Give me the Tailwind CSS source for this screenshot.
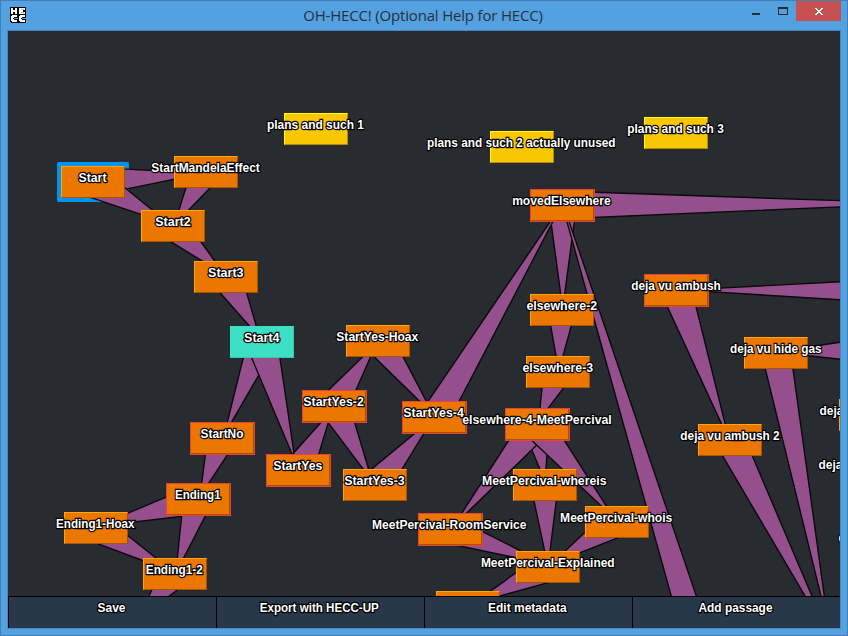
<!DOCTYPE html>
<html lang="en">
<head>
<meta charset="utf-8">
<title>OH-HECC!</title>
<script src="https://cdn.jsdelivr.net/npm/@tailwindcss/browser@4"></script>
</head>
<body class="h-[636px] w-[848px] overflow-hidden">
<div class="flex h-[636px] w-[848px] flex-col border border-[#427fb4] bg-[#54a1e2] font-['Liberation_Sans',Arial,sans-serif]">
  <header class="relative flex h-[29px] shrink-0 items-start justify-end pr-[6px]">
    <svg class="absolute left-[9px] top-[6px]" width="16" height="16" viewBox="0 0 16 16" shape-rendering="crispEdges">
      <path fill="#000" d="M0 0h16v16H1v-1H0z"/>
      <path fill="#fff" d="M1 1h2v2h2V1h2v6H5V5H3v2H1zM9 1h5v1h-3v1h2v2h-2v1h3v1H9zM2 8h5v2H4v1H3v1h1v1h3v2H2v-1H1V9h1zM10 8h5v2h-3v1h-1v1h1v1h3v2h-5v-1H9V9h1z"/>
      <path fill="#fff" d="M11 1h4v2h-2v-1h-2zM11 5h4v2h-4z"/>
      <path fill="#b9b9b9" d="M11 2h3v1h-3zM11 5h3v1h-3z"/>
      <path fill="#54a1e2" d="M4 11h4v1H4zM12 11h4v1h-4z"/>
    </svg>
    <h1 class="absolute left-0 right-[2px] top-[4px] text-center font-['Open_Sans',sans-serif] text-[15px] leading-5 tracking-[-0.18px] text-[#26303a]">OH-HECC! (Optional Help for HECC)</h1>
    <svg class="relative" width="90" height="20" viewBox="751 1 90 20" shape-rendering="crispEdges">
      <path fill="#2a2a2a" d="M752 13h8v2h-8z"/>
      <path fill="#2a2a2a" fill-rule="evenodd" d="M778 7h10v8h-10zM779 9v5h8V9z"/>
      <path fill="#c75050" d="M796 1h45v20h-45z"/>
      <path fill="#fff" d="M815 8h2v1h1v1h2v-1h1v-1h2v1h-1v1h-1v1h-1v1h1v1h1v1h1v1h-2v-1h-1v-1h-2v1h-1v1h-2v-1h1v-1h1v-1h1v-1h-1v-1h-1v-1h-1z"/>
    </svg>
  </header>
  <div class="ml-[6px] h-[599px] w-[834px] border border-[#4488c4]">
    <main id="canvas" class="relative h-[565px] overflow-hidden bg-[#282c31]">
      <svg id="links" class="absolute left-0 top-0" width="832" height="565" viewBox="8 31 832 565" fill="#944f8c" stroke="#0b090c" stroke-width="1.4"></svg>
    </main>
    <footer class="grid h-8 grid-cols-4 bg-[#28374a] text-[13px] font-bold">
      <button class="border-l border-t border-black"><svg class="block" width="207" height="31" fill="#fff" stroke="#000" stroke-width="2.4" paint-order="stroke" text-anchor="middle"><text x="102.5" y="15" textLength="28" lengthAdjust="spacingAndGlyphs">Save</text></svg></button>
      <button class="border-l border-t border-black"><svg class="block" width="207" height="31" fill="#fff" stroke="#000" stroke-width="2.4" paint-order="stroke" text-anchor="middle"><text x="102.3" y="15" textLength="119" lengthAdjust="spacingAndGlyphs">Export with HECC-UP</text></svg></button>
      <button class="border-l border-t border-black"><svg class="block" width="207" height="31" fill="#fff" stroke="#000" stroke-width="2.4" paint-order="stroke" text-anchor="middle"><text x="102.3" y="15" textLength="78.5" lengthAdjust="spacingAndGlyphs">Edit metadata</text></svg></button>
      <button class="border-l border-t border-black"><svg class="block" width="207" height="31" fill="#fff" stroke="#000" stroke-width="2.4" paint-order="stroke" text-anchor="middle"><text x="102.5" y="15" textLength="74" lengthAdjust="spacingAndGlyphs">Add passage</text></svg></button>
    </footer>
  </div>
</div>
<script>
// Each link: two edges, [x1,y1,x2,y2, x3,y3,x4,y4], running from box border to box border.
const links = [
 [125,169,174,171.7, 125,189.3,174,179.3],
 [93.3,198.3,141,214.3, 126.7,189.3,152.3,210],
 [185.7,188.3,179,210, 209.7,188.3,188.7,210],
 [171.7,242.3,202.3,261, 201.3,242.3,214.7,261],
 [220.3,293,249.3,326, 246.7,293,256.3,326],
 [243.3,358,227.3,422, 268.6,358,231.7,422],
 [251.7,358,291.7,453.3, 280,358,294,453.3],
 [205.3,455,201.7,483.3, 227.3,455,208.7,483.3],
 [166.3,497,127.7,513.3, 181.7,516.3,127.7,522.7],
 [98.3,544,143.3,560.7, 128,535.7,156,558],
 [181.7,516,177.3,558, 205.3,516,183.7,558],
 [151.7,590,149,596, 177.3,590,169.3,596],
 [292.7,454,320.7,422.7, 318.7,454,328.3,422.7],
 [328.7,390,363,356.7, 356,390,370.7,356.7],
 [374,356.7,419.3,401, 403,356.7,426.3,401],
 [328.3,422.7,363.3,469.3, 354.7,422.7,368.7,469.3],
 [371.3,469.3,414.3,433.7, 402,469.3,423.7,433.7],
 [551,222,560.7,294, 574.3,222,564.7,294],
 [428.3,401,550,222, 459.3,401,552.7,222],
 [567,222,671.3,596, 569.3,222,696.3,596],
 [595,192.3,840,200.6, 595,217.5,840,206.8],
 [550.7,325.7,556,356, 571.3,325.7,563,356],
 [542,387.7,540,408.3, 563.7,387.7,548,408.3],
 [528,441,540,469.3, 547.8,441,546,469.3],
 [508.3,441,461.7,513.3, 541,441,466.3,513.3],
 [532.7,441.3,601.3,506, 564.7,441,606.3,506],
 [534,500.7,544.7,551.3, 556.3,500.7,550,551.3],
 [482.7,531.7,521.3,551.3, 460,546,516,557.7],
 [585,532.3,565.7,550.5, 617.3,538,580,552.7],
 [516,572.7,489.3,592, 546.7,583,499.7,596],
 [840,281.7,709,288.7, 840,299.7,709,291.7],
 [667.3,306.7,721.7,424.3, 696,306.7,725.3,424.3],
 [722.7,456,805,596, 752.3,456,812,596],
 [765.3,369,821,596, 793,369,824.3,596],
 [840,342.3,808,347, 840,359.3,808,355.7]
];
// Push an edge a few pixels under the boxes at both of its ends.
const grow = (a, b, c, d) => {
  const l = Math.hypot(c - a, d - b), u = (c - a) / l * 8, v = (d - b) / l * 8;
  return [[a - u, b - v], [c + u, d + v]];
};
const svg = document.getElementById('links');
svg.innerHTML = '<rect x="57" y="162" width="72" height="40" rx="1.5" fill="#0094f0" stroke="none"/>' +
  links.map(k => {
    const [p, q] = grow(...k.slice(0, 4)), [r, s] = grow(...k.slice(4));
    return `<polygon points="${[p, q, s, r].map(t => t.map(n => n.toFixed(1)).join()).join(' ')}"/>`;
  }).join('');

const kinds = {
  o: 'absolute h-8 w-16 border bg-[#eb7700] border-t-[#ffa800] border-l-[#ffa800] border-r-[#a85300] border-b-[#a85300]',
  y: 'absolute h-8 w-16 border bg-[#f9c700] border-t-[#ffff00] border-l-[#ffff00] border-r-[#b08c00] border-b-[#b08c00]',
  t: 'absolute h-8 w-16 border bg-[#3de0c4] border-t-[#3de0c4] border-l-[#3de0c4] border-r-[#35c8b0] border-b-[#35c8b0]',
  r: 'absolute h-[33px] w-[65px] border border-[#e8403c] bg-[#eb7700] shadow-[inset_-1px_-1px_#a85300]'
};
// Kind, left, top, name, centre of the name, width of the name.
const nodes = [
 ['o',61,166,'Start',92.5,28],['o',174,156,'StartMandelaEffect',205.6,108.5],['o',141,210,'Start2',173,35.5],
 ['o',194,261,'Start3',225.8,35.5],['t',230,326,'Start4',261.8,35.5],['r',190,422,'StartNo',222,43],
 ['r',166,483,'Ending1',197.8,45.5],['o',64,512,'Ending1-Hoax',95.3,78.5],['o',143,558,'Ending1-2',174.3,57],
 ['r',266,454,'StartYes',297.8,49],['r',302,390,'StartYes-2',333.6,60.5],['o',346,325,'StartYes-Hoax',377.3,82],
 ['r',402,401,'StartYes-4',433.6,60.5],['o',343,469,'StartYes-3',374.4,60.5],['y',284,113,'plans and such 1',315.5,97],
 ['y',490,131,'plans and such 2 actually unused',521.3,188.5],['y',644,117,'plans and such 3',675.5,96.5],
 ['r',530,189,'movedElsewhere',561.4,98.5],['o',530,294,'elsewhere-2',561.8,70.8],['o',526,356,'elsewhere-3',557.8,70.8],
 ['r',505,408,'elsewhere-4-MeetPercival',537,149.5],['o',513,469,'MeetPercival-whereis',544.2,124.5],
 ['o',585,506,'MeetPercival-whois',616.2,112.3],['r',418,513,'MeetPercival-RoomService',449.2,154.3],
 ['o',516,551,'MeetPercival-Explained',547.8,133.8],['o',436,591,''],['r',644,274,'deja vu ambush',676,89.5],
 ['o',744,337,'deja vu hide gas',775.8,91.5],['o',698,424,'deja vu ambush 2',730,99.3],['o',839,399,'']
];
const canvas = document.getElementById('canvas');
nodes.forEach(([k, x, y]) => {
  const d = document.createElement('div');
  d.className = kinds[k];
  d.style.left = x - 8 + 'px';
  d.style.top = y - 31 + 'px';
  canvas.append(d);
});
const text = (x, y, w, t) => `<text x="${x}" y="${y}" textLength="${w}" lengthAdjust="spacingAndGlyphs">${t}</text>`;
canvas.insertAdjacentHTML('beforeend',
  '<svg class="absolute left-0 top-0 text-[13px] font-bold" width="832" height="565" viewBox="8 31 832 565" fill="#fff" stroke="#000" stroke-width="2.4" paint-order="stroke" text-anchor="middle">' +
  nodes.filter(n => n[3]).map(([, , y, t, c, w]) => text(c, y + 16, w, t)).join('') +
  '<g text-anchor="start">' + text(819.6, 415, 41, 'deja vu') + text(818.6, 469, 41, 'deja vu') + text(838.5, 542, 41, 'deja vu') + '</g></svg>');
</script>
</body>
</html>
